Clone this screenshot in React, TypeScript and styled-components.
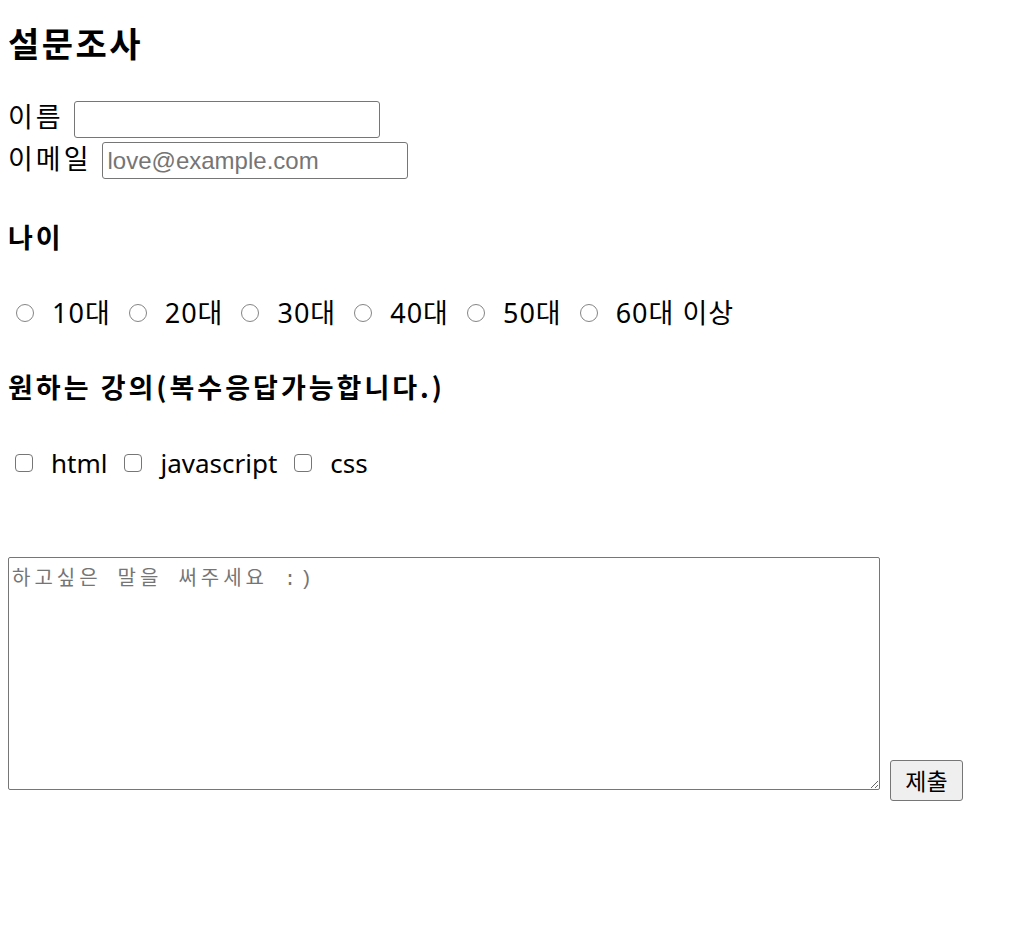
import React from "react"
import styled, { createGlobalStyle } from "styled-components"

const GlobalStyle = createGlobalStyle`
  body {
    margin: 0;
    background: #ffffff;
    color: #000000;
    font-family: "Noto Sans", "Noto Sans CJK KR", sans-serif;
  }
`

const ages = ["10대", "20대", "30대", "40대", "50대", "60대 이상"]
const lectures = ["html", "javascript", "css"]

export default function App() {
  return (
    <>
      <GlobalStyle />
      <Form onSubmit={(e) => e.preventDefault()}>
        <Title>설문조사</Title>

        <FieldList>
          <Field>
            <FieldLabel>이름</FieldLabel>
            <TextInput type="text" />
          </Field>
          <Field>
            <FieldLabel>이메일</FieldLabel>
            <TextInput type="email" placeholder="love@example.com" />
          </Field>
        </FieldList>

        <SectionTitle>나이</SectionTitle>
        <OptionRow>
          {ages.map((age) => (
            <Option key={age}>
              <Radio type="radio" name="age" value={age} />
              <OptionText $hangul>{age}</OptionText>
            </Option>
          ))}
        </OptionRow>

        <SectionTitle>원하는 강의(복수응답가능합니다.)</SectionTitle>
        <OptionRow>
          {lectures.map((lecture) => (
            <Option key={lecture}>
              <Checkbox type="checkbox" value={lecture} />
              <OptionText>{lecture}</OptionText>
            </Option>
          ))}
        </OptionRow>

        <MessageRow>
          <Message placeholder="하고싶은 말을 써주세요 :)" />
          <SubmitButton type="submit">제출</SubmitButton>
        </MessageRow>
      </Form>
    </>
  )
}

const Form = styled.form`
  display: flex;
  flex-direction: column;
  padding: 8px;
`

const Title = styled.h3`
  margin: 15px 0 0;
  font-family: "Noto Sans CJK KR", sans-serif;
  font-size: 34px;
  line-height: 40px;
  letter-spacing: 2.5px;
  font-weight: 700;
`

const FieldList = styled.div`
  display: flex;
  flex-direction: column;
  gap: 4px;
  margin-top: 37px;
`

const Field = styled.label`
  display: flex;
  align-items: baseline;
  gap: 10px;
`

const FieldLabel = styled.span`
  font-family: "Noto Sans CJK KR", sans-serif;
  font-size: 27px;
  line-height: 32px;
  letter-spacing: 3px;
`

const TextInput = styled.input`
  box-sizing: border-box;
  width: 306px;
  height: 37px;
  margin: 0;
  padding: 0 5px;
  border: 1px solid #767676;
  border-radius: 3px;
  font-family: "Liberation Sans", Arial, sans-serif;
  font-size: 24px;
  color: #000000;
  background: #ffffff;

  &::placeholder {
    color: #757575;
  }
`

const SectionTitle = styled.h4`
  margin: 42px 0 0;
  font-family: "Noto Sans CJK KR", sans-serif;
  font-size: 27px;
  line-height: 32px;
  letter-spacing: 3px;
  font-weight: 700;
`

const OptionRow = styled.div`
  display: flex;
  align-items: center;
  margin-top: 44px;
  height: 32px;
`

const Option = styled.label`
  display: inline-flex;
  align-items: center;
  gap: 18px;
  margin-right: 10px;
`

const OptionText = styled.span<{ $hangul?: boolean }>`
  font-family: "Noto Sans", "Noto Sans CJK KR", sans-serif;
  font-size: ${({ $hangul }) => ($hangul ? "27px" : "26px")};
  letter-spacing: ${({ $hangul }) => ($hangul ? "1px" : "0")};
  line-height: 32px;
`

const Radio = styled.input`
  appearance: none;
  box-sizing: border-box;
  width: 18px;
  height: 18px;
  margin: 0 0 0 8px;
  border: 1.5px solid #858585;
  border-radius: 50%;
  background: #ffffff;
`

const Checkbox = styled.input`
  appearance: none;
  box-sizing: border-box;
  width: 18px;
  height: 18px;
  margin: 0 0 0 7px;
  border: 1.5px solid #767676;
  border-radius: 4px;
  background: #ffffff;
`

const MessageRow = styled.div`
  margin-top: 78px;
`

const Message = styled.textarea`
  box-sizing: border-box;
  width: 872px;
  height: 233px;
  margin: 0;
  padding: 4px 3px;
  border: 1px solid #767676;
  border-radius: 2px;
  vertical-align: baseline;
  font-family: "Liberation Mono", "Noto Sans CJK KR", monospace;
  font-size: 20px;
  letter-spacing: 4px;

  &::placeholder {
    color: #757575;
  }
`

const SubmitButton = styled.button`
  box-sizing: border-box;
  width: 73px;
  height: 41px;
  margin-left: 10px;
  padding: 0;
  border: 1px solid #767676;
  border-radius: 3px;
  background: #efefef;
  color: #000000;
  font-family: "Noto Sans CJK KR", sans-serif;
  font-size: 23px;
  vertical-align: baseline;
`
